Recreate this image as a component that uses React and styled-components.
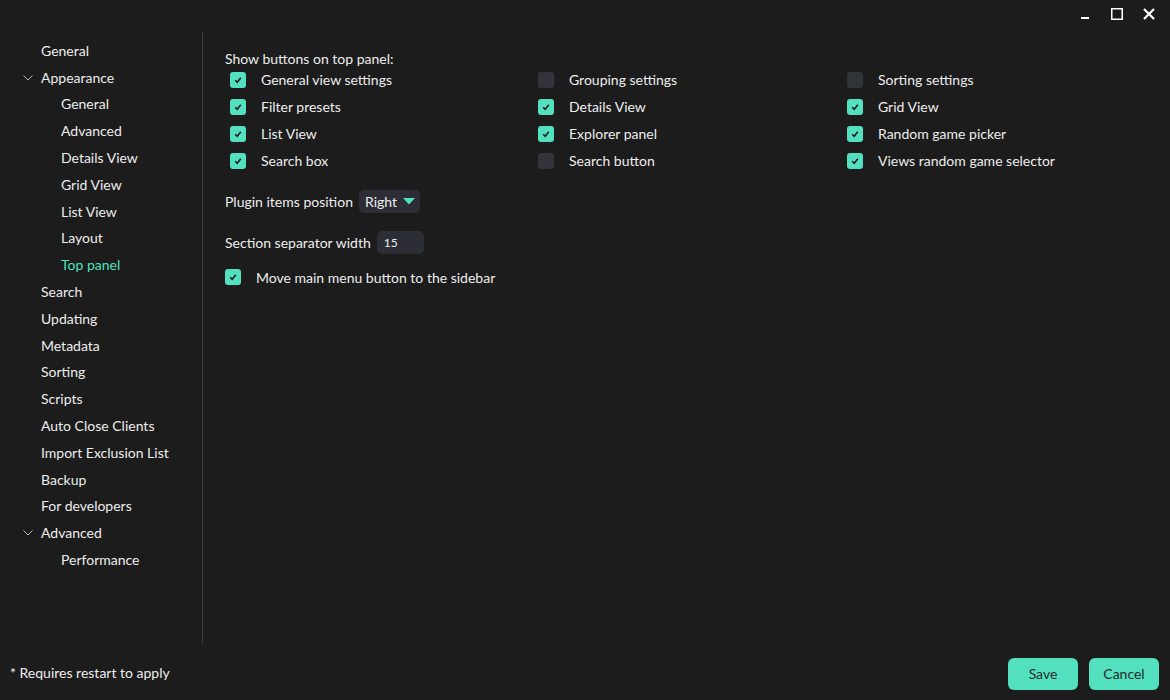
import React from "react"
import styled, { createGlobalStyle } from "styled-components"

const ACCENT = "#52e0bf"

const GlobalStyle = createGlobalStyle`
  html, body {
    margin: 0;
    padding: 0;
    background: #1c1c1c;
  }
  body {
    font-family: Lato, "Open Sans", sans-serif;
    color: #ededed;
  }
`

const sections = [
  { label: "General", level: 0 },
  { label: "Appearance", level: 0, open: true },
  { label: "General", level: 1 },
  { label: "Advanced", level: 1 },
  { label: "Details View", level: 1 },
  { label: "Grid View", level: 1 },
  { label: "List View", level: 1 },
  { label: "Layout", level: 1 },
  { label: "Top panel", level: 1, active: true },
  { label: "Search", level: 0 },
  { label: "Updating", level: 0 },
  { label: "Metadata", level: 0 },
  { label: "Sorting", level: 0 },
  { label: "Scripts", level: 0 },
  { label: "Auto Close Clients", level: 0 },
  { label: "Import Exclusion List", level: 0 },
  { label: "Backup", level: 0 },
  { label: "For developers", level: 0 },
  { label: "Advanced", level: 0, open: true },
  { label: "Performance", level: 1 },
]

const columns = [
  [
    { label: "General view settings", on: true },
    { label: "Filter presets", on: true },
    { label: "List View", on: true },
    { label: "Search box", on: true },
  ],
  [
    { label: "Grouping settings", on: false },
    { label: "Details View", on: true },
    { label: "Explorer panel", on: true },
    { label: "Search button", on: false },
  ],
  [
    { label: "Sorting settings", on: false },
    { label: "Grid View", on: true },
    { label: "Random game picker", on: true },
    { label: "Views random game selector", on: true },
  ],
]

function Check({ on }) {
  return (
    <Box $on={on}>
      {on && (
        <svg width="10" height="10" viewBox="0 0 10 10">
          <path d="M2.2 5.2 L4.2 7.2 L7.8 2.8" fill="none" stroke="#1c1c1c" strokeWidth="1.6" />
        </svg>
      )}
    </Box>
  )
}

export default function App() {
  return (
    <Window>
      <GlobalStyle />
      <TitleBar>
        <WinButton>
          <svg width="12" height="12" viewBox="0 0 12 12">
            <rect x="2" y="9" width="8" height="2" fill="#fff" />
          </svg>
        </WinButton>
        <WinButton>
          <svg width="14" height="14" viewBox="0 0 14 14">
            <rect x="1.75" y="1.75" width="10.5" height="10.5" fill="none" stroke="#fff" strokeWidth="1.5" />
          </svg>
        </WinButton>
        <WinButton>
          <svg width="14" height="14" viewBox="0 0 14 14">
            <path d="M2 2 L12 12 M12 2 L2 12" stroke="#fff" strokeWidth="2.2" />
          </svg>
        </WinButton>
      </TitleBar>
      <Main>
        <Sidebar>
          {sections.map((s, i) => (
            <NavItem key={i} $level={s.level} $active={s.active}>
              {s.open && (
                <Chevron viewBox="0 0 10 6" width="10" height="6">
                  <path d="M0.5 0.5 L5 5 L9.5 0.5" fill="none" stroke="#bbb" strokeWidth="1" />
                </Chevron>
              )}
              {s.label}
            </NavItem>
          ))}
        </Sidebar>
        <Content>
          <Heading>Show buttons on top panel:</Heading>
          <Grid>
            {columns.map((col, ci) => (
              <Column key={ci}>
                {col.map((item) => (
                  <CheckRow key={item.label}>
                    <Check on={item.on} />
                    <CheckLabel>{item.label}</CheckLabel>
                  </CheckRow>
                ))}
              </Column>
            ))}
          </Grid>
          <FieldRow>
            <FieldLabel>Plugin items position</FieldLabel>
            <Select>
              Right
              <svg width="12" height="7" viewBox="0 0 12 7">
                <path d="M0 0 L12 0 L6 6.5 Z" fill={ACCENT} />
              </svg>
            </Select>
          </FieldRow>
          <FieldRow $top={18}>
            <FieldLabel>Section separator width</FieldLabel>
            <NumberBox>15</NumberBox>
          </FieldRow>
          <OptionRow>
            <Check on />
            <OptionLabel>Move main menu button to the sidebar</OptionLabel>
          </OptionRow>
        </Content>
      </Main>
      <Footer>
        <Note>* Requires restart to apply</Note>
        <Buttons>
          <Button>Save</Button>
          <Button>Cancel</Button>
        </Buttons>
      </Footer>
    </Window>
  )
}

const Window = styled.div`
  width: 1170px;
  height: 700px;
  display: flex;
  flex-direction: column;
  background: #1c1c1c;
  overflow: hidden;
`

const TitleBar = styled.div`
  height: 32px;
  display: flex;
  justify-content: flex-end;
  align-items: flex-start;
  padding-right: 8px;
  gap: 6px;
`

const WinButton = styled.div`
  width: 26px;
  height: 28px;
  display: flex;
  align-items: center;
  justify-content: center;
`

const Main = styled.div`
  flex: 1;
  display: flex;
  min-height: 0;
`

const Sidebar = styled.div`
  width: 203px;
  border-right: 1px solid #3a3a44;
  padding-top: 5px;
  box-sizing: border-box;
`

const NavItem = styled.div`
  position: relative;
  height: 26.8px;
  display: flex;
  align-items: center;
  padding-left: ${(p) => (p.$level ? 61 : 41)}px;
  font-size: 14px;
  color: ${(p) => (p.$active ? ACCENT : "#ededed")};
`

const Chevron = styled.svg`
  position: absolute;
  left: 23px;
  top: 11px;
`

const Content = styled.div`
  flex: 1;
  padding: 17px 0 0 22px;
`

const Heading = styled.div`
  font-size: 14px;
  line-height: 20px;
`

const Grid = styled.div`
  display: grid;
  grid-template-columns: 308px 309px 300px;
  margin-top: -3px;
`

const Column = styled.div`
  display: flex;
  flex-direction: column;
`

const CheckRow = styled.div`
  height: 27px;
  display: flex;
  align-items: center;
  padding-left: 5px;
`

const Box = styled.div`
  width: 16px;
  height: 16px;
  border-radius: 3px;
  background: ${(p) => (p.$on ? ACCENT : "#33333c")};
  display: flex;
  align-items: center;
  justify-content: center;
  flex-shrink: 0;
`

const CheckLabel = styled.span`
  margin-left: 15px;
  font-size: 14px;
`

const FieldRow = styled.div`
  display: flex;
  align-items: center;
  margin-top: ${(p) => p.$top ?? 16}px;
  gap: 6px;
`

const FieldLabel = styled.span`
  font-size: 14px;
`

const Select = styled.div`
  height: 23px;
  padding: 0 5px 0 6px;
  border-radius: 5px;
  background: #2d2d35;
  display: flex;
  align-items: center;
  gap: 6px;
  font-size: 14px;
`

const NumberBox = styled.div`
  width: 40px;
  height: 23px;
  padding-left: 7px;
  border-radius: 5px;
  background: #2d2d35;
  display: flex;
  align-items: center;
  font-size: 12px;
`

const OptionRow = styled.div`
  display: flex;
  align-items: center;
  margin-top: 13px;
  height: 20px;
`

const OptionLabel = styled.span`
  margin-left: 15px;
  font-size: 14px;
`

const Footer = styled.div`
  height: 55px;
  display: flex;
  align-items: center;
  justify-content: space-between;
  padding: 0 11px 0 10px;
`

const Note = styled.span`
  font-size: 14px;
`

const Buttons = styled.div`
  display: flex;
  gap: 11px;
  margin-top: 2px;
`

const Button = styled.div`
  width: 70px;
  height: 32px;
  border-radius: 6px;
  background: ${ACCENT};
  color: #2a2a2a;
  font-size: 14px;
  display: flex;
  align-items: center;
  justify-content: center;
`
